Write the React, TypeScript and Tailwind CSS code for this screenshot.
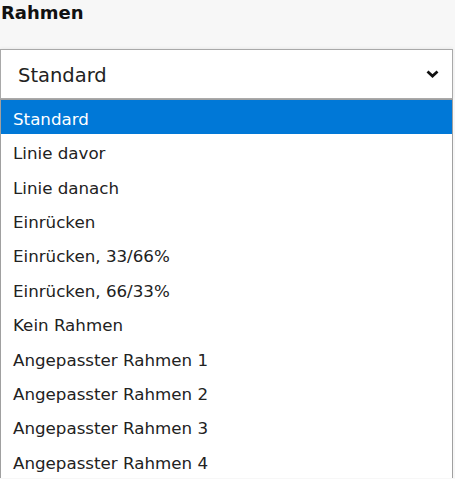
const options = [
  'Standard',
  'Linie davor',
  'Linie danach',
  'Einrücken',
  'Einrücken, 33/66%',
  'Einrücken, 66/33%',
  'Kein Rahmen',
  'Angepasster Rahmen 1',
  'Angepasster Rahmen 2',
  'Angepasster Rahmen 3',
  'Angepasster Rahmen 4',
]

const Chevron = () => (
  <svg width="13" height="8" viewBox="0 0 13 8" fill="none">
    <path d="M1.5 1.5l5 4.5 5-4.5" stroke="#111" strokeWidth="2.8" strokeLinejoin="miter" />
  </svg>
)

export default function App() {
  return (
    <div className="h-[479px] w-[455px] overflow-hidden bg-[#f7f7f7] font-['DejaVu_Sans',Verdana,sans-serif] text-[#222]">
      <div className="h-[49px] pl-[1px] pt-[4px] text-[18px] font-bold leading-[18px] text-[#111]">Rahmen</div>

      {/* closed select */}
      <div className="flex h-[50px] w-[453px] items-center justify-between border border-[#a9a9a9] bg-white pl-[17px] pr-[13px] shadow-[0_-1px_3px_rgba(0,0,0,0.06)]">
        <span className="pt-[3px] text-[19.5px] leading-none">Standard</span>
        <Chevron />
      </div>

      {/* open list */}
      <ul className="w-[453px] border-x border-t border-[#a0a0a0] bg-white">
        {options.map((opt, i) => (
          <li
            key={opt}
            className={
              i === 0
                ? 'flex h-[34.4px] items-center bg-[#0078d7] pl-[12px] pt-[4px] text-[16.7px] leading-none text-white'
                : 'flex h-[34.4px] items-center pl-[12px] pt-[4px] text-[16.7px] leading-none text-[#222]'
            }
          >
            {opt}
          </li>
        ))}
      </ul>
    </div>
  )
}
